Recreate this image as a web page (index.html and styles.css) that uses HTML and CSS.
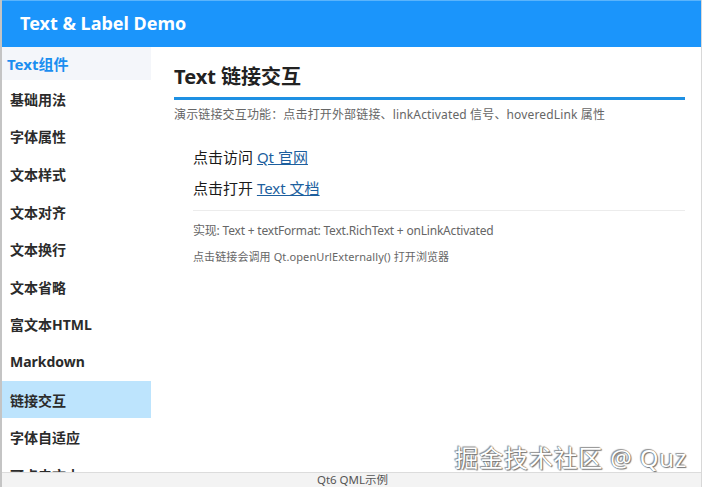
FILE: index.html
```html
<!DOCTYPE html>
<html lang="zh-CN">
<head>
  <meta charset="UTF-8">
  <title>Text &amp; Label Demo</title>
  <link rel="stylesheet" href="styles.css">
</head>
<body>
  <div class="window">
    <div class="header">
      <h1>Text &amp; Label Demo</h1>
    </div>

    <div class="main">
      <div class="sidebar">
        <div class="section-title">Text组件</div>
        <div class="nav-item">基础用法</div>
        <div class="nav-item">字体属性</div>
        <div class="nav-item">文本样式</div>
        <div class="nav-item">文本对齐</div>
        <div class="nav-item">文本换行</div>
        <div class="nav-item">文本省略</div>
        <div class="nav-item">富文本HTML</div>
        <div class="nav-item">Markdown</div>
        <div class="nav-item active">链接交互</div>
        <div class="nav-item">字体自适应</div>
        <div class="nav-item">可点击文本</div>
      </div>

      <div class="content">
        <h2 class="page-title">Text 链接交互</h2>
        <p class="page-desc">演示链接交互功能：点击打开外部链接、linkActivated 信号、hoveredLink 属性</p>

        <div class="demo">
          <p class="link-line">点击访问 <a href="#">Qt 官网</a></p>
          <p class="link-line">点击打开 <a href="#">Text 文档</a></p>
          <div class="divider"></div>
          <p class="note">实现: Text + textFormat: Text.RichText + onLinkActivated</p>
          <p class="note small">点击链接会调用 Qt.openUrlExternally() 打开浏览器</p>
        </div>
      </div>
    </div>

    <div class="status-bar">Qt6 QML示例</div>

    <div class="watermark">掘金技术社区 @ Quz</div>
  </div>
</body>
</html>
```

FILE: styles.css
```css
* {
  margin: 0;
  padding: 0;
  box-sizing: border-box;
  font-family: 'Noto Sans', 'Noto Sans CJK SC', sans-serif;
}

body {
  width: 702px;
  height: 487px;
  overflow: hidden;
  background-color: #ffffff;
}

.window {
  position: relative;
  width: 702px;
  height: 487px;
  display: flex;
  flex-direction: column;
  border-left: 2px solid #c4c4c4;
  border-right: 1px solid #d8d8d8;
  overflow: hidden;
}

.header {
  height: 47px;
  flex-shrink: 0;
  background-color: #1b95fb;
  border-top: 1px solid #5ab4fc;
  display: flex;
  align-items: center;
  padding-left: 18px;
}

.header h1 {
  color: #ffffff;
  font-size: 18px;
  font-weight: 700;
  margin-top: -2px;
}

.main {
  flex: 1;
  display: flex;
  min-height: 0;
}

.sidebar {
  width: 149px;
  flex-shrink: 0;
  overflow: hidden;
}

.section-title {
  height: 33px;
  background-color: #f4f6fa;
  color: #1b8ef0;
  font-size: 15px;
  font-weight: 700;
  display: flex;
  align-items: center;
  padding-left: 5px;
}

.nav-item {
  height: 37.6px;
  display: flex;
  align-items: center;
  padding-left: 8px;
  font-size: 14px;
  font-weight: 700;
  color: #2b2b2b;
}

.nav-item.active {
  background-color: #bde4fd;
}

.content {
  flex: 1;
  padding: 16px 16px 0 23px;
}

.page-title {
  font-size: 20px;
  font-weight: 700;
  color: #222222;
  line-height: 28px;
  padding-bottom: 6px;
  border-bottom: 3px solid #1e90e3;
}

.page-desc {
  margin-top: 5px;
  font-size: 12px;
  letter-spacing: 0.15px;
  color: #666666;
  line-height: 20px;
}

.demo {
  padding: 17px 0 0 19px;
}

.link-line {
  font-size: 15px;
  color: #1a1a1a;
  line-height: 31px;
}

.link-line a {
  color: #1d5f9e;
  text-decoration: underline;
}

.divider {
  height: 1px;
  background-color: #ececec;
  margin: 6px 0 8px;
}

.note {
  font-size: 12px;
  letter-spacing: -0.2px;
  color: #666666;
  line-height: 24px;
}

.note.small {
  font-size: 11px;
  letter-spacing: 0.1px;
  margin-top: 2px;
}

.status-bar {
  height: 15px;
  flex-shrink: 0;
  background-color: #f3f3f3;
  border-top: 1px solid #dcdcdc;
  font-size: 11.5px;
  line-height: 14px;
  color: #555555;
  text-align: center;
  padding-left: 2px;
}

.watermark {
  position: absolute;
  right: 14px;
  bottom: 13px;
  font-size: 24px;
  color: #ffffff;
  letter-spacing: 0.8px;
  text-shadow: 0 0 1px #555, 1px 1px 1px #777, -1px -1px 1px #999;
}
```
